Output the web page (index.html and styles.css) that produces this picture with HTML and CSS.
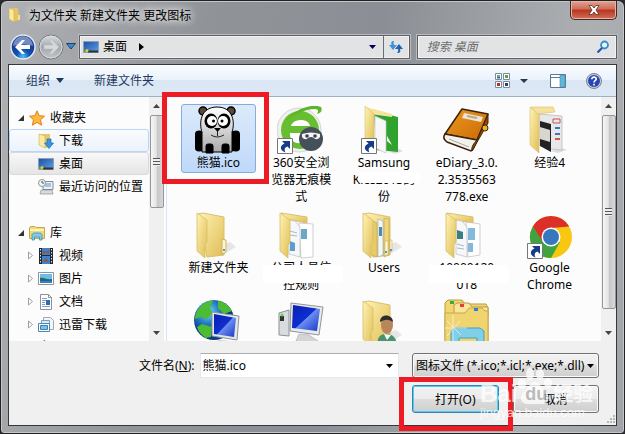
FILE: index.html
```html
<!DOCTYPE html>
<html lang="zh-CN">
<head>
    <meta charset="UTF-8">
    <meta name="viewport" content="width=device-width, initial-scale=1.0">
    <title>为文件夹 新建文件夹 更改图标</title>
    <link rel="stylesheet" href="styles.css">
</head>
<body>
    <!-- shared icons -->
    <svg class="defs" width="0" height="0" aria-hidden="true">
        <defs>
            <linearGradient id="yellow" x1="0" x2="1" y2="1">
                <stop offset="0" stop-color="#fff3b4"/><stop offset="1" stop-color="#dfbd55"/>
            </linearGradient>
            <linearGradient id="blue" y2="1" x2="1">
                <stop offset="0" stop-color="#0a1fb0"/><stop offset=".5" stop-color="#0d2fd0"/><stop offset=".52" stop-color="#6d8df0"/><stop offset="1" stop-color="#1237c8"/>
            </linearGradient>
            <linearGradient id="orange" x2="1" y2="1">
                <stop offset="0" stop-color="#ee9a1f"/><stop offset="1" stop-color="#c96a06"/>
            </linearGradient>
            <linearGradient id="sky" x2="1" y2="1">
                <stop offset="0" stop-color="#1b4fa5"/><stop offset="1" stop-color="#5fa2e4"/>
            </linearGradient>
            <radialGradient id="backball" cy=".9">
                <stop offset="0" stop-color="#4fc4f5"/><stop offset=".55" stop-color="#0f50b4"/><stop offset="1" stop-color="#16409a"/>
            </radialGradient>
            <linearGradient id="fwdball" x2="0" y2="1">
                <stop offset="0" stop-color="#dcdee1"/><stop offset=".5" stop-color="#a3a7ac"/><stop offset="1" stop-color="#c3c6ca"/>
            </linearGradient>
            <radialGradient id="ocean" cx=".35" cy=".3">
                <stop offset="0" stop-color="#8fdcf8"/><stop offset=".5" stop-color="#2a88cf"/><stop offset="1" stop-color="#0c3a86"/>
            </radialGradient>
            <linearGradient id="panda" x2="0" y2="1">
                <stop offset="0" stop-color="#fff"/><stop offset="1" stop-color="#aaa"/>
            </linearGradient>
            <symbol id="folder-back" viewBox="0 0 48 48">
                <path d="M12 45l18-2 12-7-6-5-8 3z" fill="#ddd" opacity=".7"/>
                <path d="M4 3l5-1 21 4v38l-17 2z" fill="url(#yellow)" stroke="#d9bf6c"/>
            </symbol>
            <symbol id="folder-flap" viewBox="0 0 48 48">
                <path d="M3 2l10 7v22l-2 3v13l-8-7z" fill="url(#yellow)" stroke="#d8be66" stroke-width=".8"/>
            </symbol>
            <symbol id="shortcut" viewBox="0 0 16 16">
                <path d="M.5.5h15v15H.5z" fill="#fff" stroke="#777"/>
                <path d="M5 3h8v8l-2.500-2.500c-3 1-3.500 3-2 6-6-2-6-7-1-9z" fill="#163d85"/>
            </symbol>
            <symbol id="desktop" viewBox="0 0 16 14">
                <path d="M.5 1.500h15v11H.5z" fill="url(#sky)" stroke="#8fa0b4"/>
                <path d="M5 10.500h10v2H5z" fill="#333"/><path d="M1 10h4v2H1z" fill="#3fae4c"/><circle cx="4" cy="10.500" r="1.500" fill="#f2c230"/>
            </symbol>
        </defs>
    </svg>

    <div class="dialog">
        <header class="title-bar">
            <svg width="14" height="16" viewBox="0 0 14 16"><path d="M3 1h7l1 12-6 2z" fill="#e4c463"/><path d="M1 1l5 2v12l-5-3z" fill="#fbe99c" stroke="#cdb054" stroke-width=".6"/><path d="M10 8h2v5h-2z" fill="#f6e08a"/></svg>
            <h1>为文件夹 新建文件夹 更改图标</h1>
            <button class="close" aria-label="关闭">
                <svg width="12" height="10" viewBox="0 0 12 10"><path d="M1 .5h3l2 2.500 2-2.500h3L8 5l3 4.500H8L6 7 4 9.500H1L4 5z" fill="#fff" stroke="#54302c" stroke-width=".8"/></svg>
            </button>
        </header>

        <nav class="nav-bar">
            <button class="ball" aria-label="后退">
                <svg width="26" height="26" viewBox="0 0 26 26"><circle cx="13" cy="13" r="12" fill="url(#backball)" stroke="#e3e7ee" stroke-width="1.500"/><path d="M3 12a10 10 0 0 1 20 0c-6-2-14-2-20 0z" fill="#fff" opacity=".4"/><path d="M5 13l7-7h3l-4 5h9v4h-9l4 5h-3z" fill="#fff"/></svg>
            </button>
            <button class="ball" aria-label="前进">
                <svg width="26" height="26" viewBox="0 0 26 26"><circle cx="13" cy="13" r="12" fill="url(#fwdball)" stroke="#73777d"/><circle cx="13" cy="13" r="11" fill="none" stroke="#d8dadd"/><path d="M21 13l-7-7h-3l4 5H6v4h9l-4 5h3z" fill="#d5d7da" stroke="#b5b8bc" stroke-width=".5"/></svg>
            </button>
            <button class="history" aria-label="最近的页面">
                <svg width="10" height="7" viewBox="0 0 10 7"><path d="M.5.5h9L5 6z" fill="#3b8ad0" stroke="#1d4170"/></svg>
            </button>
            <div class="address">
                <svg width="16" height="14"><use href="#desktop"/></svg>
                <span>桌面</span>
                <svg class="crumb" width="5" height="8" viewBox="0 0 5 8"><path d="M0 0v8l5-4z"/></svg>
                <button class="drop" aria-label="以前的位置"><svg width="7" height="4" viewBox="0 0 7 4"><path d="M0 0h7L3.500 4z" fill="#00005a"/></svg></button>
                <button class="refresh" aria-label="刷新">
                    <svg width="16" height="14" viewBox="0 0 16 14"><path d="M6 1C3 1 3 3 3.500 5H1l4 5 4-5H6c-.5-2-.5-3 0-4z" fill="#3f93d6"/><path d="M9 13c4 0 3.500-2 3-4h3l-4-5-4 5h3c.5 2 0 3-1 4z" fill="#2362ae"/></svg>
                </button>
            </div>
            <div class="search">
                <input type="text" placeholder="搜索 桌面" aria-label="搜索 桌面">
                <svg width="14" height="14" viewBox="0 0 14 14"><circle cx="8.500" cy="5" r="3.500" fill="#e8f4fc" stroke="#3a8cd0" stroke-width="1.800"/><path d="M6 8l-4.500 4.500" stroke="#2b55a0" stroke-width="2.200"/></svg>
            </div>
        </nav>

        <div class="client">
            <div class="toolbar">
                <button>组织 <svg width="8" height="5" viewBox="0 0 8 5"><path d="M0 0h8L4 5z" fill="#1e395b"/></svg></button>
                <button>新建文件夹</button>
                <div class="tools">
                    <button aria-label="更改视图">
                        <svg width="15" height="15" viewBox="0 0 15 15"><path d="M.5.5h6v6h-6zM8.500.5h6v6h-6zM.5 8.500h6v6h-6zM8.500 8.500h6v6h-6z" fill="#fff" stroke="#7c8ba0"/><path d="M2 4h3v1.500H2z" fill="#2b66c0"/><path d="M2 2h3v2H2z" fill="#68b070"/><path d="M10 2h3v3h-3z" fill="#59a63a"/><path d="M2 10h3v3H2z" fill="#b3301c"/><path d="M10 10h3v3h-3z" fill="#33425e"/></svg>
                    </button>
                    <button aria-label="更多选项"><svg width="8" height="4" viewBox="0 0 8 4"><path d="M0 0h8L4 4z" fill="#1e395b"/></svg></button>
                    <button class="preview" aria-label="显示预览窗格">
                        <svg width="16" height="14" viewBox="0 0 16 14"><path d="M.5.5h15v13H.5z" fill="#fff" stroke="#5d7893"/><path d="M1 3.500h9" stroke="#5d7893"/><path d="M10 1h5v12h-5z" fill="#62b5dc" stroke="#4b87ad" stroke-width=".6"/></svg>
                    </button>
                    <button aria-label="获取帮助">
                        <svg width="16" height="16" viewBox="0 0 16 16"><circle cx="8" cy="8" r="7.500" fill="#c9ced8" stroke="#7c8490"/><circle cx="8" cy="8" r="6" fill="#2748b4"/><path d="M5.800 6.200c0-3 4.600-2.600 4.400 0C10 7.800 8 7.600 8 9.500M8 10.800v1.700" fill="none" stroke="#fff" stroke-width="1.700"/></svg>
                    </button>
                </div>
            </div>

            <div class="panes">
                <aside class="sidebar">
                    <div class="tree">
                        <a href="#" class="group">
                            <svg class="twist" width="6" height="6" viewBox="0 0 6 6"><path d="M6 0v6H0z" fill="#333"/></svg>
                            <svg width="16" height="16" viewBox="0 0 16 16"><path d="M8 .8l2.200 4.900 5.300.5-4 3.600 1.200 5.400L8 12.400l-4.700 2.800 1.200-5.400-4-3.600 5.300-.5z" fill="#fdb83e" stroke="#e2801c"/></svg>
                            收藏夹
                        </a>
                        <a href="#" class="item hover">
                            <svg width="16" height="16" viewBox="0 0 16 16"><path d="M2 1h10v13l-5 1z" fill="#e7c668"/><path d="M1 1l6 2v12l-6-3z" fill="#fbeaa0" stroke="#cfb25a" stroke-width=".6"/><path d="M9 6h4v4h2.500L11 15.500 6.500 10H9z" fill="#3a96e0" stroke="#1d68b0" stroke-width=".7"/></svg>
                            下载
                        </a>
                        <a href="#" class="item active">
                            <svg width="16" height="14"><use href="#desktop"/></svg>
                            桌面
                        </a>
                        <a href="#" class="item">
                            <svg width="16" height="16" viewBox="0 0 16 16"><path d="M5 2.500h10v8H5z" fill="#eef1f3" stroke="#7f8a92"/><path d="M7 4h6v4H7z" fill="#a7c5d8"/><path d="M3 11h11l1 4H2z" fill="#d7dbdd" stroke="#8c9498" stroke-width=".7"/><circle cx="4" cy="4" r="3.500" fill="#f4f4f4" stroke="#8b959b"/><path d="M4 2v2h2" stroke="#555" fill="none"/></svg>
                            最近访问的位置
                        </a>
                        <a href="#" class="group library">
                            <svg class="twist" width="6" height="6" viewBox="0 0 6 6"><path d="M6 0v6H0z" fill="#333"/></svg>
                            <svg width="16" height="16" viewBox="0 0 16 16"><path d="M.5 2.500L2 1.500h4l1 1h8.500v11H.5z" fill="#f1d878" stroke="#c7a748"/><path d="M1 4h14v2H1z" fill="#fdf3bf"/><path d="M3 15V9.500L4.500 8h7L13 9.500V15h-2.500v-3h-5v3z" fill="#7fcbea" stroke="#3793bf" stroke-width=".8"/></svg>
                            库
                        </a>
                        <a href="#" class="item branch">
                            <svg class="twist" width="5" height="9" viewBox="0 0 5 9"><path d="M.5 1v7l4-3.500z" fill="#fff" stroke="#a0a0a0"/></svg>
                            <svg width="16" height="16" viewBox="0 0 16 16"><path d="M1 0h14v16H1z" fill="#23272e"/><path d="M4 0h8v7H4zM4 8h8v8H4z" fill="#3b83cc"/><path d="M5 2l3 2 3-2v4l-3-1-3 1zM5 14l3-4 3 4z" fill="#935740"/><path d="M2.500 1v15M13.500 1v15" stroke="#dde3ea" stroke-dasharray="1.500 1.500"/></svg>
                            视频
                        </a>
                        <a href="#" class="item branch">
                            <svg class="twist" width="5" height="9" viewBox="0 0 5 9"><path d="M.5 1v7l4-3.500z" fill="#fff" stroke="#a0a0a0"/></svg>
                            <svg width="16" height="14" viewBox="0 0 16 14"><path d="M.5.5h15v12H.5z" fill="#fff" stroke="#8c949c"/><path d="M2 2h12v9H2z" fill="#6cbbe8"/><path d="M2 6c4-1 6 2 12 1v4H2z" fill="#1f6a72"/><path d="M2 9h12v2H2z" fill="#377fc0"/></svg>
                            图片
                        </a>
                        <a href="#" class="item branch">
                            <svg class="twist" width="5" height="9" viewBox="0 0 5 9"><path d="M.5 1v7l4-3.500z" fill="#fff" stroke="#a0a0a0"/></svg>
                            <svg width="16" height="16" viewBox="0 0 16 16"><path d="M2.500.5h8l3 3v12h-11z" fill="#fff" stroke="#8b949d"/><path d="M10.500.5v3h3" fill="none" stroke="#8b949d"/><path d="M4 4.500h5M4 6.500h8M4 8.500h3M4 10.500h3M4 12.500h8" stroke="#8aa0b8"/><path d="M8 6h4v5H8z" fill="#2c6cb4"/></svg>
                            文档
                        </a>
                        <a href="#" class="item branch">
                            <svg class="twist" width="5" height="9" viewBox="0 0 5 9"><path d="M.5 1v7l4-3.500z" fill="#fff" stroke="#a0a0a0"/></svg>
                            <svg width="16" height="16" viewBox="0 0 16 16"><path d="M5.500.5h7l3 3v9h-10z" fill="#f3f7fa" stroke="#9aabb8"/><path d="M3.500 3.500h8v9h-8z" fill="#dcebf5" stroke="#7f9cb2"/><path d="M.5 6.500h11v8H.5z" fill="#fff" stroke="#5186ac"/><path d="M2.500 8.500h7v4h-7z" fill="#7cc0ea" stroke="#3982b8"/></svg>
                            迅雷下载
                        </a>
                        <a href="#" class="item branch" aria-label="音乐">
                            <svg class="note" width="16" height="16" viewBox="0 0 16 16"><path d="M6 0l6 5-2 1-2-1v9H6z" fill="#43a5e0" stroke="#2579b5" stroke-width=".6"/></svg>
                        </a>
                    </div>
                    <div class="scrollbar">
                        <svg width="7" height="4" viewBox="0 0 7 4"><path d="M0 4h7L3.500 0z" fill="#444"/></svg>
                        <div class="thumb short"><i></i></div>
                        <svg width="7" height="4" viewBox="0 0 7 4"><path d="M0 0h7L3.500 4z" fill="#444"/></svg>
                    </div>
                </aside>

                <main class="files">
                    <div class="grid">
                        <a href="#" class="file selected">
                            <svg width="48" height="48" viewBox="0 0 48 48"><circle cx="9" cy="5" r="4" fill="#5c4634" stroke="#000" stroke-width="1.500"/><circle cx="37" cy="5" r="4" fill="#5c4634" stroke="#000" stroke-width="1.500"/><path d="M1 28c0-4 4-4 8-3v20c-6 1-8 0-8-3zM46 28c0-4-4-4-8-3v20c6 1 8 0 8-3z"/><path d="M8 46V26C5 18 6 1 23 1s18 17 15 25v20z" fill="url(#panda)" stroke="#000"/><ellipse cx="17" cy="15" rx="6.500" ry="7.500"/><ellipse cx="30" cy="15" rx="6.500" ry="7.500"/><circle cx="18" cy="15" r="5" fill="#fff"/><circle cx="29" cy="15" r="5" fill="#fff"/><circle cx="19.500" cy="15" r="1.500"/><circle cx="28" cy="15" r="1.500"/><path d="M20 22h7l-3.500 4z"/><path d="M17 29q6 4 13 0M23.500 25v5" fill="none" stroke="#222"/><path d="M12 47v-7q0-2 2-2h3q2 0 2 2v7zM28 47v-7q0-2 2-2h3q2 0 2 2v7z" stroke="#000"/></svg>
                            <span>熊猫.ico</span>
                        </a>
                        <a href="#" class="file">
                            <svg width="48" height="48" viewBox="0 0 48 48"><circle cx="22" cy="24" r="22" fill="#eef0ee" stroke="#d0d5d0"/><circle cx="23" cy="24" r="19" fill="#68bd31"/><path d="M8 15C18 3 35-3 44 1c2 4-1 6-4 7 2-3 1-5-2-5C28 3 16 9 8 15z" fill="#5bb52a"/><path d="M14 20c2-8 18-8 19 0zM13 27h22v4H24c-4 0-2 4 4 3-5 7-16 2-15-7z" fill="#fff"/><circle cx="34" cy="33" r="12" fill="#46505b"/><path d="M25 28q9-3 18 0v3q-3 4-6 1-3-2-6 0-3 3-6-1z" fill="#f4f4f4"/><circle cx="30" cy="30" r="1.800" fill="#38414b"/><circle cx="38" cy="30" r="1.800" fill="#38414b"/><use href="#shortcut" y="32" width="16" height="16"/></svg>
                            <span>360安全浏览器无痕模式</span>
                        </a>
                        <a href="#" class="file">
                            <svg width="48" height="48" viewBox="0 0 48 48"><path d="M30 46l9-3 4 2-8 3z" fill="#ddd"/><path d="M14 5l24 6v35l-22-2z" fill="#2fa32d"/><path d="M6 1l26 7v3L10 8z" fill="#f5e29d"/><path d="M15 10l11 5v32l-11-5z" fill="#f7f7f7" stroke="#c6c6c6" stroke-width=".7"/><path d="M27 30l5 9-5-4z" fill="#fff"/><path d="M5 0l9 8v32l-9-5z" fill="url(#yellow)" stroke="#d9bd69" stroke-width=".6"/><use href="#shortcut" y="32" x="1" width="16" height="16"/></svg>
                            <span class="erased">Samsung Kies2013的 份<i class="patch wide"></i></span>
                        </a>
                        <a href="#" class="file">
                            <svg width="48" height="48" viewBox="0 0 48 48"><path d="M19 3l26 5-11 26L2 28z" fill="url(#orange)" stroke="#3b2208" stroke-width="1.500" stroke-linejoin="round"/><path d="M2 28c-2 3-1 6 2 8l24 9c3-2 4-6 6-11z" fill="#f3f1eb" stroke="#3b2208" stroke-width="1.500"/><path d="M34 34l11-26v9L29 45c-1-4 2-8 5-11z" fill="#8f4b08" stroke="#3b2208"/><path d="M6 33l20 8" stroke="#aaa"/><path d="M21 7l19 4-2 5-19-4z" fill="#ece5d6"/><path d="M24 10l10 2" stroke="#b4aa92" stroke-width="2"/><circle cx="42" cy="22" r="3" fill="#efb220" stroke="#3b2208"/></svg>
                            <span>eDiary_3.0.2.3535563778.exe</span>
                        </a>
                        <a href="#" class="file">
                            <svg width="48" height="48" viewBox="0 0 48 48"><path d="M24 45l12-3 5 2-9 3z" fill="#ddd"/><path d="M5 1h22l2 5-18 2z" fill="#f5e29d" stroke="#d9bd69" stroke-width=".6"/><path d="M13 8l23 2v34l-11-1-12-4z" fill="#e8e8ea" stroke="#aaa" stroke-width=".6"/><path d="M14 15l11 3v28l-11-6z" fill="#222"/><path d="M14 21l10 3v12l-10-3z" fill="#d7d6cf"/><path d="M27 13h7v4h-7z" fill="none" stroke="#c95252"/><path d="M29 22h5M29 28h5" stroke="#3979c4" stroke-width="2"/><path d="M29 33h5" stroke="#d05a38" stroke-width="2"/><path d="M4 1l9 8v38l-9-8z" fill="url(#yellow)" stroke="#d9bd69" stroke-width=".6"/></svg>
                            <span>经验4</span>
                        </a>

                        <a href="#" class="file">
                            <svg width="48" height="48" viewBox="0 0 48 48"><use href="#folder-back"/><use href="#folder-flap"/><path d="M28 28l4 1v12l-4 2z" fill="#fdf6d2" stroke="#cfb35c"/><path d="M29 38h2v2h-2z" fill="#4a9be0"/></svg>
                            <span>新建文件夹</span>
                        </a>
                        <a href="#" class="file">
                            <svg width="48" height="48" viewBox="0 0 48 48"><path d="M4 2l26 4v6L8 8z" fill="url(#yellow)" stroke="#d9bf6c"/><path d="M22 12l14 1v33l-12 1z" fill="#fff" stroke="#bbb" stroke-width=".7"/><path d="M24 18h6v10h-6z" fill="#6ca7c8"/><path d="M12 9l6 1 5 6v30l-11-3z" fill="#f5f7f9" stroke="#bbb" stroke-width=".7"/><path d="M13 20l7 2M13 24l7 1" stroke="#aab9c5"/><path d="M13 30l5 2v8h-5z" fill="#5a9dd2"/><use href="#folder-flap"/></svg>
                            <span class="erased">公司人员信控规则<i class="patch tall"></i></span>
                        </a>
                        <a href="#" class="file">
                            <svg width="48" height="48" viewBox="0 0 48 48"><use href="#folder-back"/><path d="M18 8l5 2v34l-5 2z" fill="#f3f7f9" stroke="#9db1bd" stroke-width=".7"/><path d="M19 16h3v9h-3z" fill="#4b8db0"/><path d="M24 7l5 1v36l-5 2z" fill="#efd57c" stroke="#c7a954" stroke-width=".7"/><path d="M9 8l8 4v34l-8-3z" fill="#e7ca6a" stroke="#c7a954" stroke-width=".7"/><use href="#folder-flap"/><path d="M25 30h3v13l-3 2zM30 29h2v11l-2 1z" fill="#fff8d8" stroke="#ceb05a" stroke-width=".6"/><path d="M25 40h2v2h-2zM30 38h2v2h-2z" fill="#4a9be0"/></svg>
                            <span>Users</span>
                        </a>
                        <a href="#" class="file">
                            <svg width="48" height="48" viewBox="0 0 48 48"><path d="M4 2l26 4v6L8 8z" fill="url(#yellow)" stroke="#d9bf6c"/><path d="M23 11l14 2v31l-12 2z" fill="#fff" stroke="#bbb" stroke-width=".7"/><path d="M25 17h7v12h-7zM25 32h5v9h-5z" fill="#83b9dd"/><path d="M13 9l6 1 5 6v30l-11-3z" fill="#f5f7f9" stroke="#bbb" stroke-width=".7"/><path d="M14 19l6 2v7h-6z" fill="#397d87"/><path d="M14 33l7 2M14 37l7 1" stroke="#aab9c5"/><use href="#folder-flap"/></svg>
                            <span class="erased">10000120 018<i class="patch tall"></i></span>
                        </a>
                        <a href="#" class="file">
                            <svg width="48" height="48" viewBox="0 0 48 48"><circle cx="25" cy="26" r="21" fill="#f8c811"/><path d="M6.800 15.500A21 21 0 0 1 43.200 15.500L25 17l-9 14z" fill="#dc2f27"/><path d="M6.800 15.500A21 21 0 0 0 25 47l9-16H17z" fill="#3fa33f"/><circle cx="25" cy="26" r="9.500" fill="#fff"/><circle cx="25" cy="26" r="8" fill="#3677bd"/><use href="#shortcut" y="32" x="1" width="16" height="16"/></svg>
                            <span>Google Chrome</span>
                        </a>

                        <a href="#" class="file" aria-label="网络">
                            <svg width="48" height="48" viewBox="0 0 48 48"><circle cx="20" cy="21" r="20" fill="url(#ocean)"/><path d="M5 9c5-6 11-8 14-7l-3 7 3 5-6 6-6-2-6 2c0-4 2-8 4-11zM24 2c7 1 11 5 14 10l-8 3-6-6zM8 25l10 3-1 10-5 1c-5-3-8-7-9-11z" fill="#4cbc35"/><path d="M18 13l27 4-2 24-25-4z" fill="#e4e6e8" stroke="#909498"/><path d="M20 15l22 4-2 19-20-3z" fill="url(#blue)"/><path d="M24 41l12 1 5 4H24z" fill="#c6cacd"/></svg>
                        </a>
                        <a href="#" class="file" aria-label="计算机">
                            <svg width="48" height="48" viewBox="0 0 48 48"><path d="M2 14l10-3v26L2 36z" fill="#d9dcde" stroke="#8d9296"/><path d="M3 17h4v5H3z" fill="#333"/><circle cx="5" cy="16" r="1.500" fill="#5fd03a"/><path d="M14 4l32 4-4 28-29-4z" fill="#e7e9ea" stroke="#92969a"/><path d="M16 6l27 4-3 22-25-3z" fill="url(#blue)"/><path d="M22 35l10 1 9 6q-10 4-22 0z" fill="#d3d6d9" stroke="#aaa" stroke-width=".6"/></svg>
                        </a>
                        <a href="#" class="file" aria-label="用户">
                            <svg width="48" height="48" viewBox="0 0 48 48"><use href="#folder-back"/><use href="#folder-flap"/><path d="M17 48c0-11 4-13 9-13s11 2 11 13z" fill="#49946d"/><path d="M24 35l3 6 4-5z" fill="#fff"/><ellipse cx="27" cy="26" rx="6" ry="9" fill="#b8865b"/><path d="M20 23c0-9 13-8 13 0-5-3-7-3-13 0z" fill="#302c2a"/></svg>
                        </a>
                        <a href="#" class="file" aria-label="库">
                            <svg width="48" height="48" viewBox="0 0 48 48"><path d="M2 48V4l3-3h14l3 4h21l2 4v39z" fill="#f2d671" stroke="#b99b45"/><path d="M11 8V6l3-2h12l3 4h16v8H11z" fill="#f8e69a" stroke="#b99b45"/><path d="M2 14h20l4-5h13l3 3h3v36H2z" fill="#f0d470" stroke="#c8a850"/><path d="M7 2h4v3H7z" fill="#3fa743"/><path d="M17 5h4v3h-4z" fill="#e2432c"/><path d="M31 9h4v3h-4z" fill="#2b83cf"/><path d="M8 48V32l3-3h26l4 3v16h-7V39H16v9z" fill="#80cfe6" stroke="#479fc0"/><path d="M10 16v28M2 29h22M4 22l14 14M17 22L4 37" stroke="#fff" opacity=".6"/></svg>
                        </a>
                    </div>
                    <div class="scrollbar">
                        <svg width="7" height="4" viewBox="0 0 7 4"><path d="M0 4h7L3.500 0z" fill="#444"/></svg>
                        <div class="thumb"><i></i></div>
                        <svg width="7" height="4" viewBox="0 0 7 4"><path d="M0 0h7L3.500 4z" fill="#444"/></svg>
                    </div>
                </main>
            </div>

            <form class="footer">
                <label for="filename">文件名(<u>N</u>):</label>
                <div class="combo">
                    <input type="text" id="filename" value="熊猫.ico">
                    <svg width="7" height="4" viewBox="0 0 7 4"><path d="M0 0h7L3.500 4z"/></svg>
                </div>
                <div class="side">
                    <div class="filter">
                        <select aria-label="文件类型">
                            <option>图标文件 (*.ico;*.icl;*.exe;*.dll)</option>
                        </select>
                        <svg width="7" height="4" viewBox="0 0 7 4"><path d="M0 0h7L3.500 4z"/></svg>
                    </div>
                    <div class="actions">
                        <button type="button" class="primary">打开(O)</button>
                        <button type="button">取消</button>
                    </div>
                </div>
            </form>
        </div>

        <svg class="grip" width="9" height="9" viewBox="0 0 9 9"><path d="M7 0h2v2H7zM7 3h2v2H7zM4 3h2v2H4zM7 6h2v2H7zM4 6h2v2H4zM1 6h2v2H1z" fill="#b5b5b5"/></svg>
        <div class="mark mark-file"></div>
        <div class="mark mark-open"></div>
        <div class="watermark">
            <div class="brand">
                <b>Bai</b>
                <div class="paw">
                    <svg width="36" height="38" viewBox="0 0 36 38"><ellipse cx="5" cy="17" rx="4" ry="5"/><ellipse cx="13" cy="7" rx="4" ry="6"/><ellipse cx="23" cy="7" rx="4" ry="6"/><ellipse cx="31" cy="16" rx="4" ry="5"/><path d="M18 15c5 0 7 7 11 10s4 12-4 12H11c-8 0-9-8-4-12s6-10 11-10z"/></svg>
                    <em>du</em>
                </div>
                <b>经验</b>
            </div>
            <p>jingyan.baidu.com</p>
        </div>
    </div>
</body>
</html>
```
FILE: styles.css
```css
:root {
    --frame-dark: #35373b;
    --client-bg: #f0f0f0;
    --pane-bg: #fcfcfc;
    --toolbar-text: #1e395b;
    --mark: #ed1c24;
}

* {
    margin: 0;
    padding: 0;
    box-sizing: border-box;
}

body {
    font-family: "Noto Sans", "Noto Sans CJK SC", sans-serif;
    font-size: 12px;
    line-height: 17px;
    color: #000;
    background: #2a2a30;
}

button,
input,
select {
    font: inherit;
    color: inherit;
    background: none;
    border: none;
    outline: none;
}

a {
    color: inherit;
    text-decoration: none;
}

svg {
    display: block;
    flex: none;
}

.defs {
    position: absolute;
}

.dialog {
    position: relative;
    display: flex;
    flex-direction: column;
    height: 100vh;
    padding: 0 7px 7px;
    border: 1px solid #222;
    border-radius: 7px 7px 4px 4px;
    overflow: hidden;
    background: linear-gradient(100deg, #b0b2b5 0, #909398 30%, #8b8e94 55%, #adb0b3 85%, #a0a3a7 100%);
    box-shadow: inset 0 0 0 1px #c4c6c9;
}

/* title */
.title-bar {
    display: flex;
    align-items: center;
    height: 28px;
    gap: 7px;
}

.title-bar h1 {
    flex: 1;
    font-size: 12px;
    font-weight: normal;
    text-shadow: 0 0 8px #fff, 0 0 8px #fff;
}

.close {
    display: flex;
    align-items: center;
    justify-content: center;
    align-self: flex-start;
    width: 47px;
    height: 19px;
    border: 1px solid #4a2724;
    border-top: none;
    border-radius: 0 0 5px 5px;
    background: linear-gradient(#dfa493, #cf6c59 45%, #b83420 50%, #d07158);
    box-shadow: inset 0 0 0 1px #e6b5a8;
}

/* navigation */
.nav-bar {
    display: flex;
    align-items: center;
    height: 35px;
    padding-left: 2px;
}

.ball {
    margin-right: 2px;
}

.history {
    margin-right: 3px;
}

.address,
.search {
    display: flex;
    align-items: center;
    height: 24px;
    border: 1px solid #5d6065;
    background: #e2e3e5;
    box-shadow: inset 0 0 0 1px #f2f2f2, 0 0 0 1px #b9bbbe;
}

.address {
    flex: 1;
    padding-left: 3px;
    gap: 4px;
    margin-right: 7px;
}

.crumb {
    margin-left: 8px;
}

.drop {
    margin-left: auto;
    padding: 0 3px;
}

.refresh {
    display: flex;
    align-items: center;
    justify-content: center;
    align-self: stretch;
    width: 26px;
    border-left: 1px solid #6b6e72;
}

.search {
    width: 33%;
    padding: 0 6px 0 9px;
}

.search input {
    flex: 1;
    min-width: 0;
}

.search input::placeholder {
    color: #6d6d6d;
    font-style: italic;
}

/* client area */
.client {
    flex: 1;
    display: flex;
    flex-direction: column;
    min-height: 0;
    border: 1px solid var(--frame-dark);
    background: var(--client-bg);
}

.toolbar {
    display: flex;
    align-items: center;
    height: 32px;
    flex: none;
    padding: 0 14px 0 17px;
    gap: 30px;
    color: var(--toolbar-text);
    background: linear-gradient(#fafcfe, #eaf2fb 48%, #dbe6f4 50%, #dde8f5);
    border-bottom: 1px solid #a0afc3;
}

.toolbar button {
    display: flex;
    align-items: center;
    gap: 6px;
}

.tools {
    display: flex;
    align-items: center;
    gap: 10px;
    margin-left: auto;
}

.preview {
    margin: 0 10px 0 12px;
}

.panes {
    flex: 1;
    display: flex;
    min-height: 0;
}

/* tree */
.sidebar {
    display: flex;
    width: 158px;
    flex: none;
    background: var(--pane-bg);
    border-right: 1px solid #d6e5f5;
}

.tree {
    flex: 1;
    padding: 9px 0 0;
    overflow: hidden;
}

.tree a {
    display: flex;
    align-items: center;
    height: 23px;
    border: 1px solid transparent;
    border-radius: 3px;
    white-space: nowrap;
}

.tree .group {
    padding-left: 8px;
    gap: 5px;
}

.tree .library {
    margin-top: 23px;
}

.tree .item {
    padding-left: 28px;
    gap: 5px;
}

.tree .branch {
    padding-left: 18px;
}

.tree .hover {
    border-color: #b8d6fb;
    background: linear-gradient(#fafbfd, #ebf3fd);
}

.tree .active {
    border-color: #d9d9d9;
    background: linear-gradient(#f8f8f8, #e5e5e5);
}

.note {
    margin-left: 10px;
}

/* scroll bars */
.scrollbar {
    display: flex;
    flex-direction: column;
    align-items: center;
    flex: none;
    width: 15px;
    padding: 7px 0 6px;
    background: #f0f0f0;
}

.sidebar .scrollbar {
    margin-right: 2px;
}

.thumb {
    display: flex;
    align-items: center;
    justify-content: center;
    width: 14px;
    height: 194px;
    margin: 7px 0 auto;
    border: 1px solid #969696;
    border-radius: 2px;
    background: linear-gradient(90deg, #f6f6f6, #e4e4e4 45%, #c6c6c9 50%, #d8d8da);
}

.thumb.short {
    height: 93px;
}

.thumb i {
    width: 7px;
    height: 8px;
    background: repeating-linear-gradient(#555 0, #555 1px, #eee 1px, #eee 3px);
}

/* file list */
.files {
    flex: 1;
    display: flex;
    min-width: 0;
    background: var(--pane-bg);
}

.grid {
    flex: 1;
    display: grid;
    grid-template-columns: repeat(5, 1fr);
    align-content: start;
    row-gap: 2px;
    padding: 7px 10px 0;
    overflow: hidden;
}

.file {
    display: flex;
    flex-direction: column;
    align-items: center;
    justify-self: center;
    align-self: start;
    width: 75px;
    padding: 1px 0;
    border: 1px solid transparent;
    border-radius: 3px;
    text-align: center;
}

.file span {
    width: 64px;
    overflow-wrap: anywhere;
}

.file.selected {
    border-color: #84acdd;
    background: linear-gradient(#dceafb, #bfd9fa);
}

/* parts of names wiped out */
.erased {
    position: relative;
}

.patch {
    position: absolute;
    left: -6px;
    width: 80px;
    background: #fff;
    border-radius: 4px;
}

.patch.wide {
    top: 18px;
    left: 6px;
    width: 62px;
    height: 11px;
}

.patch.tall {
    top: 6px;
    height: 18px;
}

/* file name, filter and buttons */
.footer {
    display: flex;
    align-items: flex-start;
    flex: none;
    padding: 12px 17px 12px 130px;
}

.footer label {
    padding-top: 4px;
    margin-right: 5px;
}

.combo,
.filter {
    display: flex;
    align-items: center;
    height: 25px;
}

.combo {
    flex: 1;
    margin-right: 13px;
    padding-right: 5px;
    background: #fff;
    border: 1px solid #e3e9ef;
    border-top-color: #abadb3;
}

.combo input {
    flex: 1;
    min-width: 0;
    padding-left: 2px;
}

.side {
    width: 187px;
}

.filter {
    position: relative;
}

.filter select {
    width: 100%;
    height: 25px;
    padding-left: 3px;
    appearance: none;
}

.filter svg {
    position: absolute;
    right: 5px;
}

.filter select,
.actions button {
    border: 1px solid #707070;
    border-radius: 3px;
    background: linear-gradient(#f2f2f2, #ebebeb 50%, #dddddd 50%, #cfcfcf);
    box-shadow: inset 0 0 0 1px #fafafa;
}

.actions {
    display: flex;
    gap: 14px;
    margin-top: 7px;
}

.actions button {
    flex: 1;
    height: 28px;
}

.actions .primary {
    border-color: #3c7fb1;
    box-shadow: inset 0 0 0 1px #48d0f5;
}

.grip {
    position: absolute;
    right: 9px;
    bottom: 9px;
}

/* red frames over the file and the open button */
.mark {
    position: absolute;
    border: 5px solid var(--mark);
}

.mark-file {
    left: 161px;
    top: 91px;
    width: 107px;
    height: 92px;
}

.mark-open {
    right: 111px;
    bottom: 2px;
    width: 114px;
    height: 54px;
}

.watermark {
    position: absolute;
    right: 30px;
    bottom: 12px;
    width: 114px;
    font-family: "Liberation Sans", "Noto Sans CJK SC", sans-serif;
    color: #fff;
    opacity: .75;
    pointer-events: none;
}

.brand {
    display: flex;
    align-items: flex-end;
}

.brand b {
    font-size: 20px;
    line-height: 22px;
}

.brand b:first-child {
    font-size: 24px;
}

.paw {
    position: relative;
    fill: #fff;
}

.paw em {
    position: absolute;
    left: 8px;
    bottom: 2px;
    font-size: 18px;
    font-style: normal;
    font-weight: bold;
    color: #aaa;
}

.watermark p {
    font-size: 13px;
    line-height: 16px;
}
```
